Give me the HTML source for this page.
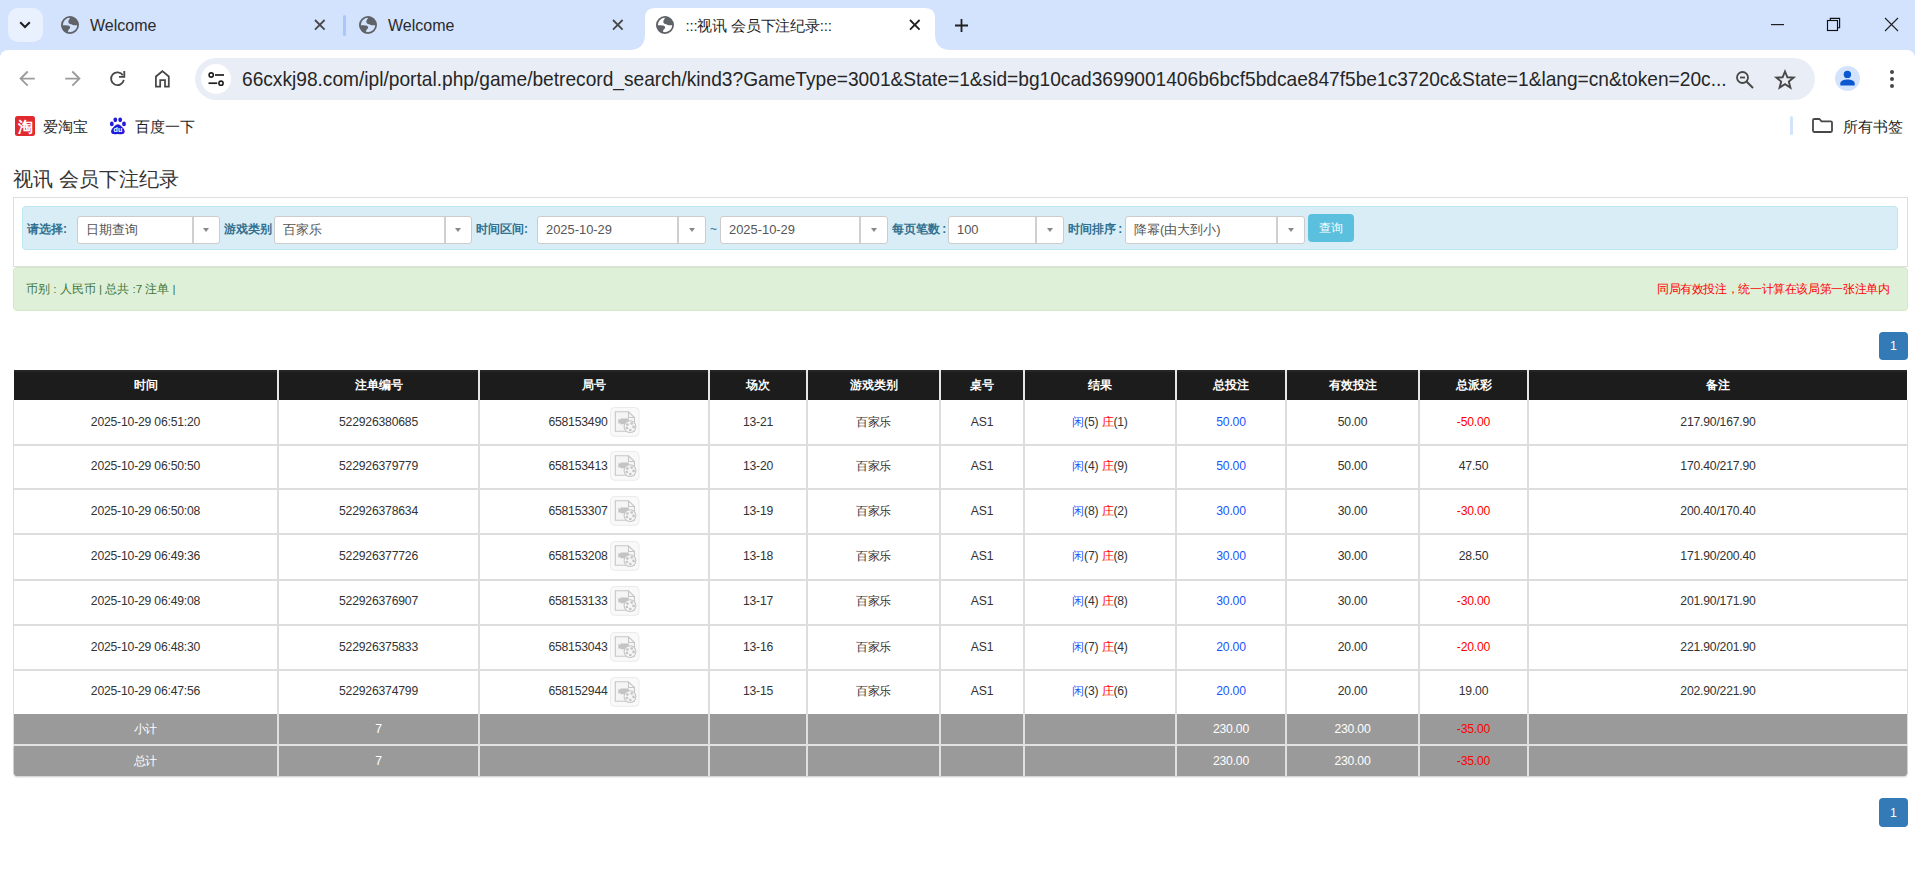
<!DOCTYPE html><html><head><meta charset="utf-8"><title>视讯 会员下注纪录</title><style>
*{box-sizing:border-box;margin:0;padding:0}
html,body{width:1915px;height:880px;overflow:hidden;background:#fff}
body{position:relative;font-family:"Liberation Sans",sans-serif;color:#333}
.a{position:absolute}
.t{position:absolute;white-space:nowrap}
svg{position:absolute;overflow:visible}
</style></head><body>
<div class="a" style="left:0px;top:0px;width:1915px;height:62px;background:#d3e3fd"></div>
<div class="a" style="left:8px;top:8px;width:35px;height:34px;background:#e9f0fe;border-radius:10px"></div>
<svg style="left:19px;top:21px" width="12" height="8" viewBox="0 0 12 8"><path d="M1.2 1.2 L6 6 L10.8 1.2" fill="none" stroke="#1f1f1f" stroke-width="2"/></svg>
<svg style="left:61px;top:16px" width="18" height="18" viewBox="0 0 18 18"><circle cx="9" cy="9" r="8.1" fill="none" stroke="#5f6368" stroke-width="1.8"/><path d="M9.8 0.6C9 2.5 7 4.5 7.3 6.2C7.6 7.8 10 8.2 11.3 8.7C12.5 9.2 14 9.6 16.8 9A8 8 0 0 0 9.8 0.6Z" fill="#5f6368"/><path d="M0.6 9.2C3 9.3 6 9.3 7.3 9.5C8.8 10 9.8 11.2 8.8 12.5C7.5 13.5 6.8 14.5 6.8 17.4A8.2 8.2 0 0 1 0.6 9.2Z" fill="#5f6368"/></svg>
<div class="t" style="left:90px;top:18.2px;font-size:16px;line-height:16px;color:#2b2b2b;font-weight:normal;">Welcome</div>
<svg style="left:315.2px;top:20.2px" width="9.6" height="9.6" viewBox="0 0 9.6 9.6"><path d="M0 0L9.6 9.6M9.6 0L0 9.6" stroke="#474747" stroke-width="1.8"/></svg>
<div class="a" style="left:343px;top:15px;width:3px;height:21px;background:#a8c7fa;border-radius:2px"></div>
<svg style="left:359px;top:16px" width="18" height="18" viewBox="0 0 18 18"><circle cx="9" cy="9" r="8.1" fill="none" stroke="#5f6368" stroke-width="1.8"/><path d="M9.8 0.6C9 2.5 7 4.5 7.3 6.2C7.6 7.8 10 8.2 11.3 8.7C12.5 9.2 14 9.6 16.8 9A8 8 0 0 0 9.8 0.6Z" fill="#5f6368"/><path d="M0.6 9.2C3 9.3 6 9.3 7.3 9.5C8.8 10 9.8 11.2 8.8 12.5C7.5 13.5 6.8 14.5 6.8 17.4A8.2 8.2 0 0 1 0.6 9.2Z" fill="#5f6368"/></svg>
<div class="t" style="left:388px;top:18.2px;font-size:16px;line-height:16px;color:#2b2b2b;font-weight:normal;">Welcome</div>
<svg style="left:613.2px;top:20.2px" width="9.6" height="9.6" viewBox="0 0 9.6 9.6"><path d="M0 0L9.6 9.6M9.6 0L0 9.6" stroke="#474747" stroke-width="1.8"/></svg>
<svg style="left:629px;top:7px" width="322" height="43" viewBox="0 0 322 43"><path d="M0 43 Q16 43 16 27 V11 Q16 1 26 1 H296 Q306 1 306 11 V27 Q306 43 322 43 Z" fill="#fff"/></svg>
<svg style="left:656px;top:16px" width="18" height="18" viewBox="0 0 18 18"><circle cx="9" cy="9" r="8.1" fill="none" stroke="#5f6368" stroke-width="1.8"/><path d="M9.8 0.6C9 2.5 7 4.5 7.3 6.2C7.6 7.8 10 8.2 11.3 8.7C12.5 9.2 14 9.6 16.8 9A8 8 0 0 0 9.8 0.6Z" fill="#5f6368"/><path d="M0.6 9.2C3 9.3 6 9.3 7.3 9.5C8.8 10 9.8 11.2 8.8 12.5C7.5 13.5 6.8 14.5 6.8 17.4A8.2 8.2 0 0 1 0.6 9.2Z" fill="#5f6368"/></svg>
<div class="t" style="left:685.5px;top:17.6px;font-size:15px;line-height:16px;color:#1f1f1f;font-weight:normal;letter-spacing:-0.2px">:::视讯 会员下注纪录:::</div>
<svg style="left:910.2px;top:20.2px" width="9.6" height="9.6" viewBox="0 0 9.6 9.6"><path d="M0 0L9.6 9.6M9.6 0L0 9.6" stroke="#1f1f1f" stroke-width="1.8"/></svg>
<svg style="left:954.5px;top:18.5px" width="13" height="13" viewBox="0 0 13 13"><path d="M6.5 0V13M0 6.5H13" stroke="#1f1f1f" stroke-width="1.8"/></svg>
<svg style="left:1771px;top:24px" width="13" height="2" viewBox="0 0 13 2"><rect x="0" y="0" width="13" height="1.2" fill="#1f1f1f"/></svg>
<svg style="left:1826px;top:17px" width="15" height="15" viewBox="0 0 15 15"><rect x="1.5" y="3.5" width="10" height="10" fill="none" stroke="#111" stroke-width="1.15"/><path d="M4.3 3.3V1.4H13.6V10.7H11.7" fill="none" stroke="#111" stroke-width="1.15"/></svg>
<svg style="left:1885px;top:18px" width="13" height="13" viewBox="0 0 13 13"><path d="M0 0L13 13M13 0L0 13" stroke="#1f1f1f" stroke-width="1.1"/></svg>
<div class="a" style="left:0px;top:50px;width:1915px;height:54px;background:#fff;border-radius:8px 8px 0 0"></div>
<svg style="left:19px;top:70px" width="17" height="17" viewBox="0 0 17 17"><path d="M15.8 8.6H2M8.7 1.5L1.6 8.6L8.7 15.7" fill="none" stroke="#9c9c9c" stroke-width="1.9"/></svg>
<svg style="left:64px;top:70px" width="17" height="17" viewBox="0 0 17 17"><path d="M1.2 8.6H15M8.3 1.5L15.4 8.6L8.3 15.7" fill="none" stroke="#9c9c9c" stroke-width="1.9"/></svg>
<svg style="left:109px;top:70px" width="17" height="17" viewBox="0 0 17 17"><path d="M14.8 9.8A6.4 6.4 0 1 1 13.9 5.3" fill="none" stroke="#474747" stroke-width="1.8"/><path d="M10 6.9H15.3V1.1" fill="none" stroke="#474747" stroke-width="1.8"/></svg>
<svg style="left:154px;top:70px" width="17" height="18" viewBox="0 0 17 18"><path d="M1.9 16.5V6.5L8.4 1.2L14.8 6.5V16.5H11V10.1H6.2V16.5Z" fill="none" stroke="#474747" stroke-width="1.75" stroke-linejoin="miter"/></svg>
<div class="a" style="left:195px;top:58px;width:1620px;height:42px;background:#e9eef6;border-radius:21px"></div>
<div class="a" style="left:201px;top:64px;width:30px;height:30px;background:#fff;border-radius:15px"></div>
<svg style="left:208px;top:72px" width="17" height="15" viewBox="0 0 17 15"><circle cx="3.2" cy="3" r="2.1" fill="none" stroke="#1f1f1f" stroke-width="1.6"/><path d="M7 3H16" stroke="#1f1f1f" stroke-width="1.7"/><circle cx="13" cy="11.2" r="2.1" fill="none" stroke="#1f1f1f" stroke-width="1.6"/><path d="M0.5 11.2H9.2" stroke="#1f1f1f" stroke-width="1.7"/></svg>
<div class="t" style="left:242px;top:68.2px;font-size:20.6px;line-height:22px;color:#262626;font-weight:normal;transform:scaleX(0.9295);transform-origin:0 0">66cxkj98.com/ipl/portal.php/game/betrecord_search/kind3?GameType=3001&amp;State=1&amp;sid=bg10cad3699001406b6bcf5bdcae847f5be1c3720c&amp;State=1&amp;lang=cn&amp;token=20c...</div>
<svg style="left:1736px;top:71px" width="18" height="18" viewBox="0 0 18 18"><circle cx="6.5" cy="6.5" r="5.5" fill="none" stroke="#474747" stroke-width="1.8"/><path d="M4 6.5H9" stroke="#474747" stroke-width="1.8"/><path d="M10.5 10.5L17 17" stroke="#474747" stroke-width="2"/></svg>
<svg style="left:1775px;top:70px" width="20" height="19" viewBox="0 0 20 19"><path d="M10 1.5L12.4 7.3L18.6 7.6L13.8 11.5L15.4 17.6L10 14.2L4.6 17.6L6.2 11.5L1.4 7.6L7.6 7.3Z" fill="none" stroke="#474747" stroke-width="1.9" stroke-linejoin="miter"/></svg>
<div class="a" style="left:1835px;top:66px;width:25px;height:25px;background:#d3e3fd;border-radius:50%"></div>
<svg style="left:1840px;top:71px" width="15" height="15" viewBox="0 0 15 15"><circle cx="7.4" cy="3.4" r="3.7" fill="#0b57d0"/><path d="M0.3 14.5V12.5C0.3 10 4 8.6 7.5 8.6S14.7 10 14.7 12.5V14.5Z" fill="#0b57d0"/></svg>
<div class="a" style="left:1890.35px;top:69.9px;width:4px;height:4px;border-radius:50%;background:#474747"></div>
<div class="a" style="left:1890.35px;top:76.8px;width:4px;height:4px;border-radius:50%;background:#474747"></div>
<div class="a" style="left:1890.35px;top:83.6px;width:4px;height:4px;border-radius:50%;background:#474747"></div>
<svg style="left:15px;top:116px" width="20" height="20" viewBox="0 0 20 20"><rect width="20" height="20" rx="2.5" fill="#e02a2f"/><text x="10" y="15.5" text-anchor="middle" font-size="15" font-weight="bold" fill="#fff" font-family="Liberation Sans,sans-serif">淘</text></svg>
<div class="t" style="left:43px;top:118px;font-size:15px;line-height:17px;color:#1f1f1f;font-weight:normal;">爱淘宝</div>
<svg style="left:104px;top:112px" width="28" height="28" viewBox="0 0 28 28"><g fill="#2319dc"><ellipse cx="7.8" cy="11.9" rx="1.9" ry="2.3"/><ellipse cx="11.3" cy="7.8" rx="1.9" ry="2.4"/><ellipse cx="16.2" cy="7.8" rx="1.9" ry="2.4"/><ellipse cx="20" cy="11.9" rx="1.9" ry="2.3"/><path d="M13.9 12.2C11.6 12.2 9.4 15 7.9 17C6.7 18.6 6.8 21.6 9 22.1C10.8 22.5 12.1 21.9 13.9 21.9C15.7 21.9 17 22.5 18.8 22.1C21 21.6 21.1 18.6 19.9 17C18.4 15 16.2 12.2 13.9 12.2Z"/></g><text x="13.9" y="20.4" text-anchor="middle" font-size="7.2" font-weight="bold" fill="#fff" font-family="Liberation Sans,sans-serif">du</text></svg>
<div class="t" style="left:135px;top:118px;font-size:15px;line-height:17px;color:#1f1f1f;font-weight:normal;">百度一下</div>
<div class="a" style="left:1790px;top:116px;width:3px;height:19px;background:#d3e3fd;border-radius:2px"></div>
<svg style="left:1812px;top:118px" width="21" height="15" viewBox="0 0 21 15"><path d="M1 2.2Q1 1 2.2 1H7.5L9.5 3.3H18.8Q20 3.3 20 4.5V12.8Q20 14 18.8 14H2.2Q1 14 1 12.8Z" fill="none" stroke="#474747" stroke-width="1.8" stroke-linejoin="round"/></svg>
<div class="t" style="left:1843px;top:118px;font-size:15px;line-height:17px;color:#1f1f1f;font-weight:normal;">所有书签</div>
<div class="t" style="left:13px;top:168px;font-size:20px;line-height:22px;color:#333;font-weight:normal;">视讯 会员下注纪录</div>
<div class="a" style="left:13px;top:197px;width:1895px;height:70px;border:1px solid #ddd;background:#fff"></div>
<div class="a" style="left:22px;top:206px;width:1876px;height:44px;background:#d9edf7;border:1px solid #bce8f1;border-radius:4px"></div>
<div class="t" style="left:27px;top:222px;font-size:12px;line-height:14px;color:#31708f;font-weight:bold;">请选择:</div>
<div class="a" style="left:77px;top:216px;width:143px;height:28px;background:#fff;border:1px solid #ccc;border-radius:3px"></div>
<div class="a" style="left:192px;top:217px;width:1.6px;height:26px;background:#cfcfcf"></div>
<div class="a" style="left:203.1px;top:228px;width:0;height:0;border-left:3.5px solid transparent;border-right:3.5px solid transparent;border-top:4px solid #888"></div>
<div class="t" style="left:86px;top:222px;font-size:12.9px;line-height:15px;color:#555;font-weight:normal;">日期查询</div>
<div class="t" style="left:224px;top:222px;font-size:12px;line-height:14px;color:#31708f;font-weight:bold;">游戏类别</div>
<div class="a" style="left:274px;top:216px;width:198px;height:28px;background:#fff;border:1px solid #ccc;border-radius:3px"></div>
<div class="a" style="left:444px;top:217px;width:1.6px;height:26px;background:#cfcfcf"></div>
<div class="a" style="left:455.1px;top:228px;width:0;height:0;border-left:3.5px solid transparent;border-right:3.5px solid transparent;border-top:4px solid #888"></div>
<div class="t" style="left:283px;top:222px;font-size:12.9px;line-height:15px;color:#555;font-weight:normal;">百家乐</div>
<div class="t" style="left:476px;top:222px;font-size:12px;line-height:14px;color:#31708f;font-weight:bold;">时间区间:</div>
<div class="a" style="left:537px;top:216px;width:169px;height:28px;background:#fff;border:1px solid #ccc;border-radius:3px"></div>
<div class="a" style="left:677px;top:217px;width:1.6px;height:26px;background:#cfcfcf"></div>
<div class="a" style="left:688.6px;top:228px;width:0;height:0;border-left:3.5px solid transparent;border-right:3.5px solid transparent;border-top:4px solid #888"></div>
<div class="t" style="left:546px;top:222px;font-size:12.9px;line-height:15px;color:#555;font-weight:normal;">2025-10-29</div>
<div class="t" style="left:710px;top:222px;font-size:12px;line-height:14px;color:#31708f;font-weight:normal;">~</div>
<div class="a" style="left:720px;top:216px;width:168px;height:28px;background:#fff;border:1px solid #ccc;border-radius:3px"></div>
<div class="a" style="left:859px;top:217px;width:1.6px;height:26px;background:#cfcfcf"></div>
<div class="a" style="left:870.6px;top:228px;width:0;height:0;border-left:3.5px solid transparent;border-right:3.5px solid transparent;border-top:4px solid #888"></div>
<div class="t" style="left:729px;top:222px;font-size:12.9px;line-height:15px;color:#555;font-weight:normal;">2025-10-29</div>
<div class="t" style="left:892px;top:222px;font-size:12px;line-height:14px;color:#31708f;font-weight:bold">每页笔数<span style="letter-spacing:-1px"> </span>:</div>
<div class="a" style="left:948px;top:216px;width:116px;height:28px;background:#fff;border:1px solid #ccc;border-radius:3px"></div>
<div class="a" style="left:1035px;top:217px;width:1.6px;height:26px;background:#cfcfcf"></div>
<div class="a" style="left:1046.6px;top:228px;width:0;height:0;border-left:3.5px solid transparent;border-right:3.5px solid transparent;border-top:4px solid #888"></div>
<div class="t" style="left:957px;top:222px;font-size:12.9px;line-height:15px;color:#555;font-weight:normal;">100</div>
<div class="t" style="left:1068px;top:222px;font-size:12px;line-height:14px;color:#31708f;font-weight:bold">时间排序<span style="letter-spacing:-1px"> </span>:</div>
<div class="a" style="left:1125px;top:216px;width:180px;height:28px;background:#fff;border:1px solid #ccc;border-radius:3px"></div>
<div class="a" style="left:1276px;top:217px;width:1.6px;height:26px;background:#cfcfcf"></div>
<div class="a" style="left:1287.6px;top:228px;width:0;height:0;border-left:3.5px solid transparent;border-right:3.5px solid transparent;border-top:4px solid #888"></div>
<div class="t" style="left:1134px;top:222px;font-size:12.9px;line-height:15px;color:#555;font-weight:normal;">降幂(由大到小)</div>
<div class="a" style="left:1308px;top:214px;width:46px;height:28px;background:#5bc0de;border-radius:4px"></div>
<div class="t" style="left:1031px;width:600px;text-align:center;top:221px;font-size:12px;line-height:14px;color:#fff;font-weight:normal;">查询</div>
<div class="a" style="left:13px;top:267px;width:1895px;height:44px;background:#dff0d8;border:1px solid #d6e9c6;border-radius:4px"></div>
<div class="t" style="left:26px;top:282px;font-size:11.65px;line-height:14px;color:#3c763d;font-weight:normal;">币别 : 人民币 | 总共 :7 注单 |</div>
<div class="t" style="left:1657px;top:282px;font-size:12px;line-height:14px;color:#ff0000;font-weight:normal;letter-spacing:-0.38px">同局有效投注，统一计算在该局第一张注单内</div>
<div class="a" style="left:1879px;top:332px;width:29px;height:28px;background:#337ab7;border-radius:4px"></div>
<div class="t" style="left:1593.5px;width:600px;text-align:center;top:339.4px;font-size:12.4px;line-height:14px;color:#fff;font-weight:normal;">1</div>
<div class="a" style="left:14px;top:370px;width:1893px;height:30px;background:#1c1c1c"></div>
<div class="a" style="left:14px;top:370px;width:1893px;height:2px;background:#262626"></div>
<div class="a" style="left:277px;top:370px;width:2px;height:30px;background:#e6e6e6"></div>
<div class="a" style="left:478px;top:370px;width:2px;height:30px;background:#e6e6e6"></div>
<div class="a" style="left:708px;top:370px;width:2px;height:30px;background:#e6e6e6"></div>
<div class="a" style="left:806px;top:370px;width:2px;height:30px;background:#e6e6e6"></div>
<div class="a" style="left:939px;top:370px;width:2px;height:30px;background:#e6e6e6"></div>
<div class="a" style="left:1023px;top:370px;width:2px;height:30px;background:#e6e6e6"></div>
<div class="a" style="left:1175px;top:370px;width:2px;height:30px;background:#e6e6e6"></div>
<div class="a" style="left:1285px;top:370px;width:2px;height:30px;background:#e6e6e6"></div>
<div class="a" style="left:1418px;top:370px;width:2px;height:30px;background:#e6e6e6"></div>
<div class="a" style="left:1527px;top:370px;width:2px;height:30px;background:#e6e6e6"></div>
<div class="t" style="left:-154.5px;width:600px;text-align:center;top:378px;font-size:12px;line-height:14px;color:#fff;font-weight:bold;">时间</div>
<div class="t" style="left:78.5px;width:600px;text-align:center;top:378px;font-size:12px;line-height:14px;color:#fff;font-weight:bold;">注单编号</div>
<div class="t" style="left:294.0px;width:600px;text-align:center;top:378px;font-size:12px;line-height:14px;color:#fff;font-weight:bold;">局号</div>
<div class="t" style="left:458.0px;width:600px;text-align:center;top:378px;font-size:12px;line-height:14px;color:#fff;font-weight:bold;">场次</div>
<div class="t" style="left:573.5px;width:600px;text-align:center;top:378px;font-size:12px;line-height:14px;color:#fff;font-weight:bold;">游戏类别</div>
<div class="t" style="left:682.0px;width:600px;text-align:center;top:378px;font-size:12px;line-height:14px;color:#fff;font-weight:bold;">桌号</div>
<div class="t" style="left:800.0px;width:600px;text-align:center;top:378px;font-size:12px;line-height:14px;color:#fff;font-weight:bold;">结果</div>
<div class="t" style="left:931.0px;width:600px;text-align:center;top:378px;font-size:12px;line-height:14px;color:#fff;font-weight:bold;">总投注</div>
<div class="t" style="left:1052.5px;width:600px;text-align:center;top:378px;font-size:12px;line-height:14px;color:#fff;font-weight:bold;">有效投注</div>
<div class="t" style="left:1173.5px;width:600px;text-align:center;top:378px;font-size:12px;line-height:14px;color:#fff;font-weight:bold;">总派彩</div>
<div class="t" style="left:1418.0px;width:600px;text-align:center;top:378px;font-size:12px;line-height:14px;color:#fff;font-weight:bold;">备注</div>
<div class="a" style="left:13px;top:400px;width:1px;height:374px;background:#ddd"></div>
<div class="a" style="left:1907px;top:400px;width:1px;height:374px;background:#ddd"></div>
<div class="a" style="left:277px;top:400px;width:2px;height:376px;background:#ddd"></div>
<div class="a" style="left:478px;top:400px;width:2px;height:376px;background:#ddd"></div>
<div class="a" style="left:708px;top:400px;width:2px;height:376px;background:#ddd"></div>
<div class="a" style="left:806px;top:400px;width:2px;height:376px;background:#ddd"></div>
<div class="a" style="left:939px;top:400px;width:2px;height:376px;background:#ddd"></div>
<div class="a" style="left:1023px;top:400px;width:2px;height:376px;background:#ddd"></div>
<div class="a" style="left:1175px;top:400px;width:2px;height:376px;background:#ddd"></div>
<div class="a" style="left:1285px;top:400px;width:2px;height:376px;background:#ddd"></div>
<div class="a" style="left:1418px;top:400px;width:2px;height:376px;background:#ddd"></div>
<div class="a" style="left:1527px;top:400px;width:2px;height:376px;background:#ddd"></div>
<div class="a" style="left:14px;top:444px;width:1893px;height:1.5px;background:#ddd"></div>
<div class="a" style="left:14px;top:488px;width:1893px;height:1.5px;background:#ddd"></div>
<div class="a" style="left:14px;top:533px;width:1893px;height:1.5px;background:#ddd"></div>
<div class="a" style="left:14px;top:579px;width:1893px;height:1.5px;background:#ddd"></div>
<div class="a" style="left:14px;top:624px;width:1893px;height:1.5px;background:#ddd"></div>
<div class="a" style="left:14px;top:669px;width:1893px;height:1.5px;background:#ddd"></div>
<div class="t" style="left:-154.5px;width:600px;text-align:center;top:414.59999999999997px;font-size:12.2px;line-height:14px;color:#333;font-weight:normal;letter-spacing:-0.2px">2025-10-29 06:51:20</div>
<div class="t" style="left:78.5px;width:600px;text-align:center;top:414.59999999999997px;font-size:12.2px;line-height:14px;color:#333;font-weight:normal;letter-spacing:-0.2px">522926380685</div>
<div class="t" style="left:294.0px;width:600px;text-align:center;top:414.59999999999997px;font-size:12.2px;line-height:14px;color:#333;letter-spacing:-0.2px"><span style="padding-right:32px">658153490</span></div>
<div class="t" style="left:458.0px;width:600px;text-align:center;top:414.59999999999997px;font-size:12.2px;line-height:14px;color:#333;font-weight:normal;letter-spacing:-0.2px">13-21</div>
<div class="t" style="left:573.5px;width:600px;text-align:center;top:414.59999999999997px;font-size:12.2px;line-height:14px;color:#333;font-weight:normal;letter-spacing:-0.2px">百家乐</div>
<div class="t" style="left:682.0px;width:600px;text-align:center;top:414.59999999999997px;font-size:12.2px;line-height:14px;color:#333;font-weight:normal;letter-spacing:-0.2px">AS1</div>
<div class="t" style="left:800.0px;width:600px;text-align:center;top:414.59999999999997px;font-size:12.2px;line-height:14px;color:#333;font-weight:normal;letter-spacing:-0.2px"><span style="color:#1a56ff">闲</span>(5) <span style="color:#ff0000">庄</span>(1)</div>
<div class="t" style="left:931.0px;width:600px;text-align:center;top:414.59999999999997px;font-size:12.2px;line-height:14px;color:#1a56ff;font-weight:normal;letter-spacing:-0.2px">50.00</div>
<div class="t" style="left:1052.5px;width:600px;text-align:center;top:414.59999999999997px;font-size:12.2px;line-height:14px;color:#333;font-weight:normal;letter-spacing:-0.2px">50.00</div>
<div class="t" style="left:1173.5px;width:600px;text-align:center;top:414.59999999999997px;font-size:12.2px;line-height:14px;color:#ff0000;font-weight:normal;letter-spacing:-0.2px">-50.00</div>
<div class="t" style="left:1418.0px;width:600px;text-align:center;top:414.59999999999997px;font-size:12.2px;line-height:14px;color:#333;font-weight:normal;letter-spacing:-0.2px">217.90/167.90</div>
<svg style="left:610px;top:407px" width="30" height="30" viewBox="0 0 30 30"><rect x=".5" y=".5" width="28.5" height="28.8" rx="4" fill="#f9f9f9" stroke="#ebebeb"/><path d="M5.3 4.8H18.5L24.5 10.5V24.2H5.3Z" fill="#f5f5f5" stroke="#c6c6c6" stroke-width="1.1"/><path d="M18.5 4.8V10.5H24.5" fill="none" stroke="#c6c6c6" stroke-width="1.1"/><path d="M10.3 11.5H18.8V17.2H10.3Z M8.3 11.8L10.3 13V15.8L8.3 17Z" fill="#c4c4c4"/><circle cx="20" cy="19.6" r="5.9" fill="#f5f5f5" stroke="#c6c6c6" stroke-width="1.1"/><circle cx="17.4" cy="17.6" r="1.35" fill="#c4c4c4"/><circle cx="21.7" cy="16.5" r="1.35" fill="#c4c4c4"/><circle cx="23.6" cy="19.9" r="1.35" fill="#c4c4c4"/><circle cx="20.3" cy="23" r="1.35" fill="#c4c4c4"/><circle cx="16.9" cy="21" r="1.35" fill="#c4c4c4"/></svg>
<div class="t" style="left:-154.5px;width:600px;text-align:center;top:458.94999999999993px;font-size:12.2px;line-height:14px;color:#333;font-weight:normal;letter-spacing:-0.2px">2025-10-29 06:50:50</div>
<div class="t" style="left:78.5px;width:600px;text-align:center;top:458.94999999999993px;font-size:12.2px;line-height:14px;color:#333;font-weight:normal;letter-spacing:-0.2px">522926379779</div>
<div class="t" style="left:294.0px;width:600px;text-align:center;top:458.94999999999993px;font-size:12.2px;line-height:14px;color:#333;letter-spacing:-0.2px"><span style="padding-right:32px">658153413</span></div>
<div class="t" style="left:458.0px;width:600px;text-align:center;top:458.94999999999993px;font-size:12.2px;line-height:14px;color:#333;font-weight:normal;letter-spacing:-0.2px">13-20</div>
<div class="t" style="left:573.5px;width:600px;text-align:center;top:458.94999999999993px;font-size:12.2px;line-height:14px;color:#333;font-weight:normal;letter-spacing:-0.2px">百家乐</div>
<div class="t" style="left:682.0px;width:600px;text-align:center;top:458.94999999999993px;font-size:12.2px;line-height:14px;color:#333;font-weight:normal;letter-spacing:-0.2px">AS1</div>
<div class="t" style="left:800.0px;width:600px;text-align:center;top:458.94999999999993px;font-size:12.2px;line-height:14px;color:#333;font-weight:normal;letter-spacing:-0.2px"><span style="color:#1a56ff">闲</span>(4) <span style="color:#ff0000">庄</span>(9)</div>
<div class="t" style="left:931.0px;width:600px;text-align:center;top:458.94999999999993px;font-size:12.2px;line-height:14px;color:#1a56ff;font-weight:normal;letter-spacing:-0.2px">50.00</div>
<div class="t" style="left:1052.5px;width:600px;text-align:center;top:458.94999999999993px;font-size:12.2px;line-height:14px;color:#333;font-weight:normal;letter-spacing:-0.2px">50.00</div>
<div class="t" style="left:1173.5px;width:600px;text-align:center;top:458.94999999999993px;font-size:12.2px;line-height:14px;color:#333;font-weight:normal;letter-spacing:-0.2px">47.50</div>
<div class="t" style="left:1418.0px;width:600px;text-align:center;top:458.94999999999993px;font-size:12.2px;line-height:14px;color:#333;font-weight:normal;letter-spacing:-0.2px">170.40/217.90</div>
<svg style="left:610px;top:451px" width="30" height="30" viewBox="0 0 30 30"><rect x=".5" y=".5" width="28.5" height="28.8" rx="4" fill="#f9f9f9" stroke="#ebebeb"/><path d="M5.3 4.8H18.5L24.5 10.5V24.2H5.3Z" fill="#f5f5f5" stroke="#c6c6c6" stroke-width="1.1"/><path d="M18.5 4.8V10.5H24.5" fill="none" stroke="#c6c6c6" stroke-width="1.1"/><path d="M10.3 11.5H18.8V17.2H10.3Z M8.3 11.8L10.3 13V15.8L8.3 17Z" fill="#c4c4c4"/><circle cx="20" cy="19.6" r="5.9" fill="#f5f5f5" stroke="#c6c6c6" stroke-width="1.1"/><circle cx="17.4" cy="17.6" r="1.35" fill="#c4c4c4"/><circle cx="21.7" cy="16.5" r="1.35" fill="#c4c4c4"/><circle cx="23.6" cy="19.9" r="1.35" fill="#c4c4c4"/><circle cx="20.3" cy="23" r="1.35" fill="#c4c4c4"/><circle cx="16.9" cy="21" r="1.35" fill="#c4c4c4"/></svg>
<div class="t" style="left:-154.5px;width:600px;text-align:center;top:503.69999999999993px;font-size:12.2px;line-height:14px;color:#333;font-weight:normal;letter-spacing:-0.2px">2025-10-29 06:50:08</div>
<div class="t" style="left:78.5px;width:600px;text-align:center;top:503.69999999999993px;font-size:12.2px;line-height:14px;color:#333;font-weight:normal;letter-spacing:-0.2px">522926378634</div>
<div class="t" style="left:294.0px;width:600px;text-align:center;top:503.69999999999993px;font-size:12.2px;line-height:14px;color:#333;letter-spacing:-0.2px"><span style="padding-right:32px">658153307</span></div>
<div class="t" style="left:458.0px;width:600px;text-align:center;top:503.69999999999993px;font-size:12.2px;line-height:14px;color:#333;font-weight:normal;letter-spacing:-0.2px">13-19</div>
<div class="t" style="left:573.5px;width:600px;text-align:center;top:503.69999999999993px;font-size:12.2px;line-height:14px;color:#333;font-weight:normal;letter-spacing:-0.2px">百家乐</div>
<div class="t" style="left:682.0px;width:600px;text-align:center;top:503.69999999999993px;font-size:12.2px;line-height:14px;color:#333;font-weight:normal;letter-spacing:-0.2px">AS1</div>
<div class="t" style="left:800.0px;width:600px;text-align:center;top:503.69999999999993px;font-size:12.2px;line-height:14px;color:#333;font-weight:normal;letter-spacing:-0.2px"><span style="color:#1a56ff">闲</span>(8) <span style="color:#ff0000">庄</span>(2)</div>
<div class="t" style="left:931.0px;width:600px;text-align:center;top:503.69999999999993px;font-size:12.2px;line-height:14px;color:#1a56ff;font-weight:normal;letter-spacing:-0.2px">30.00</div>
<div class="t" style="left:1052.5px;width:600px;text-align:center;top:503.69999999999993px;font-size:12.2px;line-height:14px;color:#333;font-weight:normal;letter-spacing:-0.2px">30.00</div>
<div class="t" style="left:1173.5px;width:600px;text-align:center;top:503.69999999999993px;font-size:12.2px;line-height:14px;color:#ff0000;font-weight:normal;letter-spacing:-0.2px">-30.00</div>
<div class="t" style="left:1418.0px;width:600px;text-align:center;top:503.69999999999993px;font-size:12.2px;line-height:14px;color:#333;font-weight:normal;letter-spacing:-0.2px">200.40/170.40</div>
<svg style="left:610px;top:496px" width="30" height="30" viewBox="0 0 30 30"><rect x=".5" y=".5" width="28.5" height="28.8" rx="4" fill="#f9f9f9" stroke="#ebebeb"/><path d="M5.3 4.8H18.5L24.5 10.5V24.2H5.3Z" fill="#f5f5f5" stroke="#c6c6c6" stroke-width="1.1"/><path d="M18.5 4.8V10.5H24.5" fill="none" stroke="#c6c6c6" stroke-width="1.1"/><path d="M10.3 11.5H18.8V17.2H10.3Z M8.3 11.8L10.3 13V15.8L8.3 17Z" fill="#c4c4c4"/><circle cx="20" cy="19.6" r="5.9" fill="#f5f5f5" stroke="#c6c6c6" stroke-width="1.1"/><circle cx="17.4" cy="17.6" r="1.35" fill="#c4c4c4"/><circle cx="21.7" cy="16.5" r="1.35" fill="#c4c4c4"/><circle cx="23.6" cy="19.9" r="1.35" fill="#c4c4c4"/><circle cx="20.3" cy="23" r="1.35" fill="#c4c4c4"/><circle cx="16.9" cy="21" r="1.35" fill="#c4c4c4"/></svg>
<div class="t" style="left:-154.5px;width:600px;text-align:center;top:548.9499999999999px;font-size:12.2px;line-height:14px;color:#333;font-weight:normal;letter-spacing:-0.2px">2025-10-29 06:49:36</div>
<div class="t" style="left:78.5px;width:600px;text-align:center;top:548.9499999999999px;font-size:12.2px;line-height:14px;color:#333;font-weight:normal;letter-spacing:-0.2px">522926377726</div>
<div class="t" style="left:294.0px;width:600px;text-align:center;top:548.9499999999999px;font-size:12.2px;line-height:14px;color:#333;letter-spacing:-0.2px"><span style="padding-right:32px">658153208</span></div>
<div class="t" style="left:458.0px;width:600px;text-align:center;top:548.9499999999999px;font-size:12.2px;line-height:14px;color:#333;font-weight:normal;letter-spacing:-0.2px">13-18</div>
<div class="t" style="left:573.5px;width:600px;text-align:center;top:548.9499999999999px;font-size:12.2px;line-height:14px;color:#333;font-weight:normal;letter-spacing:-0.2px">百家乐</div>
<div class="t" style="left:682.0px;width:600px;text-align:center;top:548.9499999999999px;font-size:12.2px;line-height:14px;color:#333;font-weight:normal;letter-spacing:-0.2px">AS1</div>
<div class="t" style="left:800.0px;width:600px;text-align:center;top:548.9499999999999px;font-size:12.2px;line-height:14px;color:#333;font-weight:normal;letter-spacing:-0.2px"><span style="color:#1a56ff">闲</span>(7) <span style="color:#ff0000">庄</span>(8)</div>
<div class="t" style="left:931.0px;width:600px;text-align:center;top:548.9499999999999px;font-size:12.2px;line-height:14px;color:#1a56ff;font-weight:normal;letter-spacing:-0.2px">30.00</div>
<div class="t" style="left:1052.5px;width:600px;text-align:center;top:548.9499999999999px;font-size:12.2px;line-height:14px;color:#333;font-weight:normal;letter-spacing:-0.2px">30.00</div>
<div class="t" style="left:1173.5px;width:600px;text-align:center;top:548.9499999999999px;font-size:12.2px;line-height:14px;color:#333;font-weight:normal;letter-spacing:-0.2px">28.50</div>
<div class="t" style="left:1418.0px;width:600px;text-align:center;top:548.9499999999999px;font-size:12.2px;line-height:14px;color:#333;font-weight:normal;letter-spacing:-0.2px">171.90/200.40</div>
<svg style="left:610px;top:541px" width="30" height="30" viewBox="0 0 30 30"><rect x=".5" y=".5" width="28.5" height="28.8" rx="4" fill="#f9f9f9" stroke="#ebebeb"/><path d="M5.3 4.8H18.5L24.5 10.5V24.2H5.3Z" fill="#f5f5f5" stroke="#c6c6c6" stroke-width="1.1"/><path d="M18.5 4.8V10.5H24.5" fill="none" stroke="#c6c6c6" stroke-width="1.1"/><path d="M10.3 11.5H18.8V17.2H10.3Z M8.3 11.8L10.3 13V15.8L8.3 17Z" fill="#c4c4c4"/><circle cx="20" cy="19.6" r="5.9" fill="#f5f5f5" stroke="#c6c6c6" stroke-width="1.1"/><circle cx="17.4" cy="17.6" r="1.35" fill="#c4c4c4"/><circle cx="21.7" cy="16.5" r="1.35" fill="#c4c4c4"/><circle cx="23.6" cy="19.9" r="1.35" fill="#c4c4c4"/><circle cx="20.3" cy="23" r="1.35" fill="#c4c4c4"/><circle cx="16.9" cy="21" r="1.35" fill="#c4c4c4"/></svg>
<div class="t" style="left:-154.5px;width:600px;text-align:center;top:594.35px;font-size:12.2px;line-height:14px;color:#333;font-weight:normal;letter-spacing:-0.2px">2025-10-29 06:49:08</div>
<div class="t" style="left:78.5px;width:600px;text-align:center;top:594.35px;font-size:12.2px;line-height:14px;color:#333;font-weight:normal;letter-spacing:-0.2px">522926376907</div>
<div class="t" style="left:294.0px;width:600px;text-align:center;top:594.35px;font-size:12.2px;line-height:14px;color:#333;letter-spacing:-0.2px"><span style="padding-right:32px">658153133</span></div>
<div class="t" style="left:458.0px;width:600px;text-align:center;top:594.35px;font-size:12.2px;line-height:14px;color:#333;font-weight:normal;letter-spacing:-0.2px">13-17</div>
<div class="t" style="left:573.5px;width:600px;text-align:center;top:594.35px;font-size:12.2px;line-height:14px;color:#333;font-weight:normal;letter-spacing:-0.2px">百家乐</div>
<div class="t" style="left:682.0px;width:600px;text-align:center;top:594.35px;font-size:12.2px;line-height:14px;color:#333;font-weight:normal;letter-spacing:-0.2px">AS1</div>
<div class="t" style="left:800.0px;width:600px;text-align:center;top:594.35px;font-size:12.2px;line-height:14px;color:#333;font-weight:normal;letter-spacing:-0.2px"><span style="color:#1a56ff">闲</span>(4) <span style="color:#ff0000">庄</span>(8)</div>
<div class="t" style="left:931.0px;width:600px;text-align:center;top:594.35px;font-size:12.2px;line-height:14px;color:#1a56ff;font-weight:normal;letter-spacing:-0.2px">30.00</div>
<div class="t" style="left:1052.5px;width:600px;text-align:center;top:594.35px;font-size:12.2px;line-height:14px;color:#333;font-weight:normal;letter-spacing:-0.2px">30.00</div>
<div class="t" style="left:1173.5px;width:600px;text-align:center;top:594.35px;font-size:12.2px;line-height:14px;color:#ff0000;font-weight:normal;letter-spacing:-0.2px">-30.00</div>
<div class="t" style="left:1418.0px;width:600px;text-align:center;top:594.35px;font-size:12.2px;line-height:14px;color:#333;font-weight:normal;letter-spacing:-0.2px">201.90/171.90</div>
<svg style="left:610px;top:586px" width="30" height="30" viewBox="0 0 30 30"><rect x=".5" y=".5" width="28.5" height="28.8" rx="4" fill="#f9f9f9" stroke="#ebebeb"/><path d="M5.3 4.8H18.5L24.5 10.5V24.2H5.3Z" fill="#f5f5f5" stroke="#c6c6c6" stroke-width="1.1"/><path d="M18.5 4.8V10.5H24.5" fill="none" stroke="#c6c6c6" stroke-width="1.1"/><path d="M10.3 11.5H18.8V17.2H10.3Z M8.3 11.8L10.3 13V15.8L8.3 17Z" fill="#c4c4c4"/><circle cx="20" cy="19.6" r="5.9" fill="#f5f5f5" stroke="#c6c6c6" stroke-width="1.1"/><circle cx="17.4" cy="17.6" r="1.35" fill="#c4c4c4"/><circle cx="21.7" cy="16.5" r="1.35" fill="#c4c4c4"/><circle cx="23.6" cy="19.9" r="1.35" fill="#c4c4c4"/><circle cx="20.3" cy="23" r="1.35" fill="#c4c4c4"/><circle cx="16.9" cy="21" r="1.35" fill="#c4c4c4"/></svg>
<div class="t" style="left:-154.5px;width:600px;text-align:center;top:639.6999999999999px;font-size:12.2px;line-height:14px;color:#333;font-weight:normal;letter-spacing:-0.2px">2025-10-29 06:48:30</div>
<div class="t" style="left:78.5px;width:600px;text-align:center;top:639.6999999999999px;font-size:12.2px;line-height:14px;color:#333;font-weight:normal;letter-spacing:-0.2px">522926375833</div>
<div class="t" style="left:294.0px;width:600px;text-align:center;top:639.6999999999999px;font-size:12.2px;line-height:14px;color:#333;letter-spacing:-0.2px"><span style="padding-right:32px">658153043</span></div>
<div class="t" style="left:458.0px;width:600px;text-align:center;top:639.6999999999999px;font-size:12.2px;line-height:14px;color:#333;font-weight:normal;letter-spacing:-0.2px">13-16</div>
<div class="t" style="left:573.5px;width:600px;text-align:center;top:639.6999999999999px;font-size:12.2px;line-height:14px;color:#333;font-weight:normal;letter-spacing:-0.2px">百家乐</div>
<div class="t" style="left:682.0px;width:600px;text-align:center;top:639.6999999999999px;font-size:12.2px;line-height:14px;color:#333;font-weight:normal;letter-spacing:-0.2px">AS1</div>
<div class="t" style="left:800.0px;width:600px;text-align:center;top:639.6999999999999px;font-size:12.2px;line-height:14px;color:#333;font-weight:normal;letter-spacing:-0.2px"><span style="color:#1a56ff">闲</span>(7) <span style="color:#ff0000">庄</span>(4)</div>
<div class="t" style="left:931.0px;width:600px;text-align:center;top:639.6999999999999px;font-size:12.2px;line-height:14px;color:#1a56ff;font-weight:normal;letter-spacing:-0.2px">20.00</div>
<div class="t" style="left:1052.5px;width:600px;text-align:center;top:639.6999999999999px;font-size:12.2px;line-height:14px;color:#333;font-weight:normal;letter-spacing:-0.2px">20.00</div>
<div class="t" style="left:1173.5px;width:600px;text-align:center;top:639.6999999999999px;font-size:12.2px;line-height:14px;color:#ff0000;font-weight:normal;letter-spacing:-0.2px">-20.00</div>
<div class="t" style="left:1418.0px;width:600px;text-align:center;top:639.6999999999999px;font-size:12.2px;line-height:14px;color:#333;font-weight:normal;letter-spacing:-0.2px">221.90/201.90</div>
<svg style="left:610px;top:632px" width="30" height="30" viewBox="0 0 30 30"><rect x=".5" y=".5" width="28.5" height="28.8" rx="4" fill="#f9f9f9" stroke="#ebebeb"/><path d="M5.3 4.8H18.5L24.5 10.5V24.2H5.3Z" fill="#f5f5f5" stroke="#c6c6c6" stroke-width="1.1"/><path d="M18.5 4.8V10.5H24.5" fill="none" stroke="#c6c6c6" stroke-width="1.1"/><path d="M10.3 11.5H18.8V17.2H10.3Z M8.3 11.8L10.3 13V15.8L8.3 17Z" fill="#c4c4c4"/><circle cx="20" cy="19.6" r="5.9" fill="#f5f5f5" stroke="#c6c6c6" stroke-width="1.1"/><circle cx="17.4" cy="17.6" r="1.35" fill="#c4c4c4"/><circle cx="21.7" cy="16.5" r="1.35" fill="#c4c4c4"/><circle cx="23.6" cy="19.9" r="1.35" fill="#c4c4c4"/><circle cx="20.3" cy="23" r="1.35" fill="#c4c4c4"/><circle cx="16.9" cy="21" r="1.35" fill="#c4c4c4"/></svg>
<div class="t" style="left:-154.5px;width:600px;text-align:center;top:684.4499999999999px;font-size:12.2px;line-height:14px;color:#333;font-weight:normal;letter-spacing:-0.2px">2025-10-29 06:47:56</div>
<div class="t" style="left:78.5px;width:600px;text-align:center;top:684.4499999999999px;font-size:12.2px;line-height:14px;color:#333;font-weight:normal;letter-spacing:-0.2px">522926374799</div>
<div class="t" style="left:294.0px;width:600px;text-align:center;top:684.4499999999999px;font-size:12.2px;line-height:14px;color:#333;letter-spacing:-0.2px"><span style="padding-right:32px">658152944</span></div>
<div class="t" style="left:458.0px;width:600px;text-align:center;top:684.4499999999999px;font-size:12.2px;line-height:14px;color:#333;font-weight:normal;letter-spacing:-0.2px">13-15</div>
<div class="t" style="left:573.5px;width:600px;text-align:center;top:684.4499999999999px;font-size:12.2px;line-height:14px;color:#333;font-weight:normal;letter-spacing:-0.2px">百家乐</div>
<div class="t" style="left:682.0px;width:600px;text-align:center;top:684.4499999999999px;font-size:12.2px;line-height:14px;color:#333;font-weight:normal;letter-spacing:-0.2px">AS1</div>
<div class="t" style="left:800.0px;width:600px;text-align:center;top:684.4499999999999px;font-size:12.2px;line-height:14px;color:#333;font-weight:normal;letter-spacing:-0.2px"><span style="color:#1a56ff">闲</span>(3) <span style="color:#ff0000">庄</span>(6)</div>
<div class="t" style="left:931.0px;width:600px;text-align:center;top:684.4499999999999px;font-size:12.2px;line-height:14px;color:#1a56ff;font-weight:normal;letter-spacing:-0.2px">20.00</div>
<div class="t" style="left:1052.5px;width:600px;text-align:center;top:684.4499999999999px;font-size:12.2px;line-height:14px;color:#333;font-weight:normal;letter-spacing:-0.2px">20.00</div>
<div class="t" style="left:1173.5px;width:600px;text-align:center;top:684.4499999999999px;font-size:12.2px;line-height:14px;color:#333;font-weight:normal;letter-spacing:-0.2px">19.00</div>
<div class="t" style="left:1418.0px;width:600px;text-align:center;top:684.4499999999999px;font-size:12.2px;line-height:14px;color:#333;font-weight:normal;letter-spacing:-0.2px">202.90/221.90</div>
<svg style="left:610px;top:677px" width="30" height="30" viewBox="0 0 30 30"><rect x=".5" y=".5" width="28.5" height="28.8" rx="4" fill="#f9f9f9" stroke="#ebebeb"/><path d="M5.3 4.8H18.5L24.5 10.5V24.2H5.3Z" fill="#f5f5f5" stroke="#c6c6c6" stroke-width="1.1"/><path d="M18.5 4.8V10.5H24.5" fill="none" stroke="#c6c6c6" stroke-width="1.1"/><path d="M10.3 11.5H18.8V17.2H10.3Z M8.3 11.8L10.3 13V15.8L8.3 17Z" fill="#c4c4c4"/><circle cx="20" cy="19.6" r="5.9" fill="#f5f5f5" stroke="#c6c6c6" stroke-width="1.1"/><circle cx="17.4" cy="17.6" r="1.35" fill="#c4c4c4"/><circle cx="21.7" cy="16.5" r="1.35" fill="#c4c4c4"/><circle cx="23.6" cy="19.9" r="1.35" fill="#c4c4c4"/><circle cx="20.3" cy="23" r="1.35" fill="#c4c4c4"/><circle cx="16.9" cy="21" r="1.35" fill="#c4c4c4"/></svg>
<div class="a" style="left:14px;top:714px;width:1893px;height:30px;background:#9a9a9a"></div>
<div class="t" style="left:-154.5px;width:600px;text-align:center;top:722.0px;font-size:12.2px;line-height:14px;color:#fff;font-weight:normal;letter-spacing:-0.2px">小计</div>
<div class="t" style="left:78.5px;width:600px;text-align:center;top:722.0px;font-size:12.2px;line-height:14px;color:#fff;font-weight:normal;letter-spacing:-0.2px">7</div>
<div class="t" style="left:931.0px;width:600px;text-align:center;top:722.0px;font-size:12.2px;line-height:14px;color:#fff;font-weight:normal;letter-spacing:-0.2px">230.00</div>
<div class="t" style="left:1052.5px;width:600px;text-align:center;top:722.0px;font-size:12.2px;line-height:14px;color:#fff;font-weight:normal;letter-spacing:-0.2px">230.00</div>
<div class="t" style="left:1173.5px;width:600px;text-align:center;top:722.0px;font-size:12.2px;line-height:14px;color:#ff0000;font-weight:normal;letter-spacing:-0.2px">-35.00</div>
<div class="a" style="left:14px;top:746px;width:1893px;height:30px;background:#9a9a9a;border-radius:0 0 3px 3px;box-shadow:0 1px 2px rgba(0,0,0,.22)"></div>
<div class="t" style="left:-154.5px;width:600px;text-align:center;top:754.0px;font-size:12.2px;line-height:14px;color:#fff;font-weight:normal;letter-spacing:-0.2px">总计</div>
<div class="t" style="left:78.5px;width:600px;text-align:center;top:754.0px;font-size:12.2px;line-height:14px;color:#fff;font-weight:normal;letter-spacing:-0.2px">7</div>
<div class="t" style="left:931.0px;width:600px;text-align:center;top:754.0px;font-size:12.2px;line-height:14px;color:#fff;font-weight:normal;letter-spacing:-0.2px">230.00</div>
<div class="t" style="left:1052.5px;width:600px;text-align:center;top:754.0px;font-size:12.2px;line-height:14px;color:#fff;font-weight:normal;letter-spacing:-0.2px">230.00</div>
<div class="t" style="left:1173.5px;width:600px;text-align:center;top:754.0px;font-size:12.2px;line-height:14px;color:#ff0000;font-weight:normal;letter-spacing:-0.2px">-35.00</div>
<div class="a" style="left:13px;top:744px;width:1895px;height:2px;background:#e2e2e2"></div>
<div class="a" style="left:277px;top:714px;width:2px;height:62px;background:#e0e0e0"></div>
<div class="a" style="left:478px;top:714px;width:2px;height:62px;background:#e0e0e0"></div>
<div class="a" style="left:708px;top:714px;width:2px;height:62px;background:#e0e0e0"></div>
<div class="a" style="left:806px;top:714px;width:2px;height:62px;background:#e0e0e0"></div>
<div class="a" style="left:939px;top:714px;width:2px;height:62px;background:#e0e0e0"></div>
<div class="a" style="left:1023px;top:714px;width:2px;height:62px;background:#e0e0e0"></div>
<div class="a" style="left:1175px;top:714px;width:2px;height:62px;background:#e0e0e0"></div>
<div class="a" style="left:1285px;top:714px;width:2px;height:62px;background:#e0e0e0"></div>
<div class="a" style="left:1418px;top:714px;width:2px;height:62px;background:#e0e0e0"></div>
<div class="a" style="left:1527px;top:714px;width:2px;height:62px;background:#e0e0e0"></div>
<div class="a" style="left:1879px;top:798px;width:29px;height:29px;background:#337ab7;border-radius:4px"></div>
<div class="t" style="left:1593.5px;width:600px;text-align:center;top:805.9px;font-size:12.4px;line-height:14px;color:#fff;font-weight:normal;">1</div>
</body></html>
